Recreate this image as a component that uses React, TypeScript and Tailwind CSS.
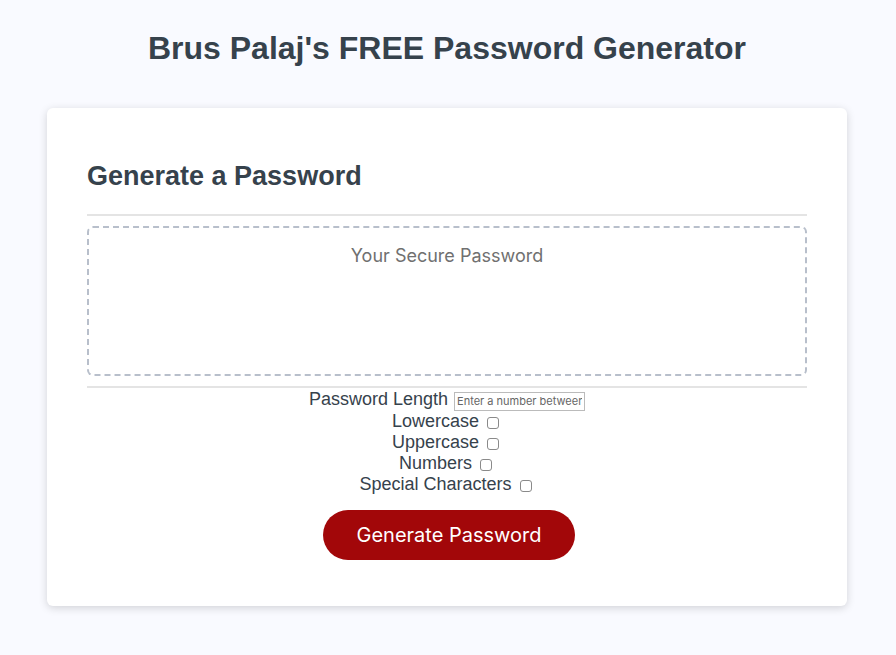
import React from "react";

const options = ["Lowercase", "Uppercase", "Numbers", "Special Characters"];

export default function App() {
  return (
    <div className="min-h-screen bg-[#f9faff] pt-6 pr-[2px] pb-12 font-['Liberation_Sans',Arial,sans-serif] text-lg leading-[21px] text-[#36424c]">
      <header className="text-center">
        <h1 className="text-[32px] leading-12 font-bold">Brus Palaj's FREE Password Generator</h1>
      </header>
      <main className="mx-auto mt-9 w-11/12 max-w-[800px] rounded-md bg-white px-10 pt-12 pb-[46px] shadow-[0_2px_8px_rgba(0,0,0,0.16)]">
        <h2 className="pb-[18px] text-[27px] leading-10 font-bold">Generate a Password</h2>
        <div className="border-y-2 border-[#e4e4e4] py-[10px]">
          <textarea
            readOnly
            aria-label="Generated password"
            placeholder="Your Secure Password"
            className="block h-[150px] w-full resize-none rounded-md border-2 border-dashed border-[#b8bfcb] px-4 py-4 text-center font-[Inter,sans-serif] text-lg leading-6 outline-none placeholder:text-[#707070]"
          />
        </div>
        <form className="text-center" onSubmit={(e) => e.preventDefault()}>
          <div className="flex h-[23px] items-center justify-center gap-[6px]">
            <label htmlFor="length">Password Length</label>
            <input
              id="length"
              type="number"
              placeholder="Enter a number between 8 and 128"
              className="mt-[3px] h-[19px] w-[131px] [appearance:textfield] border border-[#bbb] px-[2px] font-[Inter,sans-serif] text-[11px] outline-none placeholder:text-[#666] [&::-webkit-inner-spin-button]:appearance-none"
            />
          </div>
          {options.map((name) => (
            <div key={name} className="flex h-[21px] items-center justify-center gap-2">
              <label htmlFor={name}>{name}</label>
              <input
                id={name}
                type="checkbox"
                className="mt-[3px] mr-[3px] size-3 appearance-none rounded-[3px] border border-[#8a8a8a] bg-white checked:bg-[#36424c]"
              />
            </div>
          ))}
          <button
            type="button"
            className="mt-[15px] ml-1 h-[50px] w-[252px] rounded-full bg-[#a20709] font-[Inter,sans-serif] text-xl text-white"
          >
            Generate Password
          </button>
        </form>
      </main>
    </div>
  );
}
